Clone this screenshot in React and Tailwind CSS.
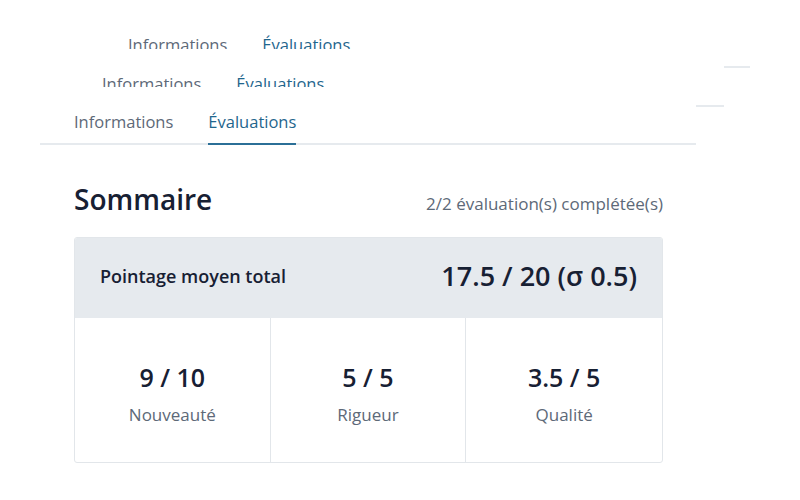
const scores = [
  { value: "9 / 10", label: "Nouveauté" },
  { value: "5 / 5", label: "Rigueur" },
  { value: "3.5 / 5", label: "Qualité" },
];

function TabBar() {
  return (
    <div className="flex gap-[35px] border-b-2 border-[#e6eaee] px-[34px] pt-[23px]">
      <button className="-mb-[2px] border-b-2 border-transparent pb-[9px] text-[16.5px] leading-6 text-[#5d6978]">
        Informations
      </button>
      <button className="-mb-[2px] border-b-2 border-[#2b6f97] pb-[9px] text-[16.5px] leading-6 text-[#1f668d]">
        Évaluations
      </button>
    </div>
  );
}

export default function App() {
  return (
    <div className="relative h-[500px] w-[800px] overflow-hidden bg-white [font-family:'Open_Sans',sans-serif]">
      {/* stacked layers behind */}
      <div className="absolute left-[94px] top-[10px] h-[200px] w-[656px] bg-white">
        <TabBar />
      </div>
      <div className="absolute left-[68px] top-[49px] z-[5] h-[200px] w-[656px] bg-white">
        <TabBar />
      </div>

      <div className="relative z-10 ml-[40px] mt-[87px] w-[656px] bg-white">
        <TabBar />

        <div className="pl-[34px] pr-[33px] pt-[36px]">
          <div className="flex items-baseline justify-between">
            <h2 className="text-[28px] font-semibold leading-9 text-[#172033]">Sommaire</h2>
            <span className="text-[17px] text-[#5d6978]">2/2 évaluation(s) complétée(s)</span>
          </div>

          <div className="mt-[20px] overflow-hidden rounded-[3px] border border-[#e2e6ea]">
            <div className="flex h-[80px] items-center justify-between bg-[#e6eaee] px-[25px] pb-[4px]">
              <span className="text-[18px] font-semibold leading-7 text-[#172033]">Pointage moyen total</span>
              <span className="text-[27px] font-semibold leading-9 text-[#172033]">17.5 / 20 (σ 0.5)</span>
            </div>
            <div className="grid h-[144px] grid-cols-3 divide-x divide-[#e2e6ea]">
              {scores.map((s) => (
                <div key={s.label} className="flex flex-col items-center pt-[43px]">
                  <div className="text-[25px] font-semibold leading-8 text-[#172033]">{s.value}</div>
                  <div className="mt-[10px] text-[17px] leading-6 text-[#5d6978]">{s.label}</div>
                </div>
              ))}
            </div>
          </div>
        </div>
      </div>
    </div>
  );
}
